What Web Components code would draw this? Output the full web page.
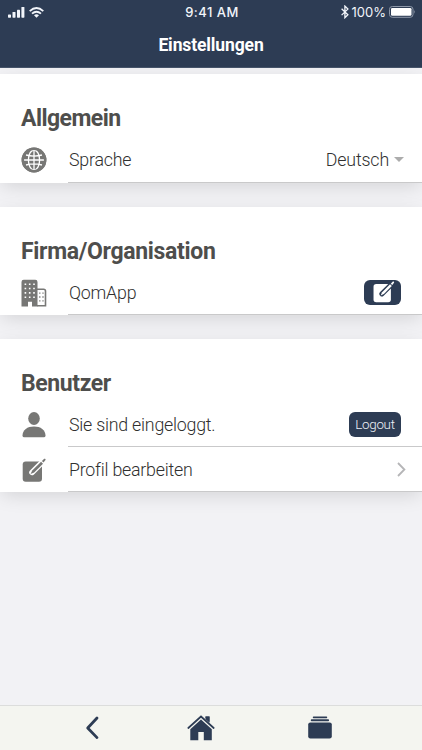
<!DOCTYPE html>
<html lang="de"><head><meta charset="utf-8"><title>Einstellungen</title>
<style>html,body{margin:0;height:100%}body{font-family:Roboto,"Liberation Sans",sans-serif;background:#f2f2f5;overflow:hidden}</style></head>
<body><settings-app></settings-app>
<script>
const define=(name,html)=>{
  const t=document.createElement('template');t.innerHTML=html;
  customElements.define(name,class extends HTMLElement{
    constructor(){super();this.attachShadow({mode:'open'}).append(t.content.cloneNode(true));}
  });
};
const icons={
 globe:`<svg width="26" height="26" viewBox="0 0 26 26"><circle cx="13" cy="13" r="12.4" fill="#777775"/><g fill="none" stroke="#fff" stroke-width="1.3"><path d="M13 3v20M2.5 13h21M5 8q8 2.2 16 0M5 18q8-2.2 16 0"/><ellipse cx="13" cy="13" rx="5.6" ry="10"/></g><circle cx="13" cy="13" r="11.2" fill="none" stroke="#777775" stroke-width="2.4"/></svg>`,
 building:`<svg width="26" height="28" viewBox="0 0 26 28"><path d="M.5 27.5V3Q.5.8 2.7.8h11.6q2.2 0 2.2 2.2v24.5H11v-4.7H7v4.7z" fill="#777775"/><path d="M16 10.2h6.6q1.9 0 1.9 1.9v14.6H16" fill="none" stroke="#777775" stroke-width="1.6"/><path d="M4.4 4.4v16M8.7 4.4v16M13 4.4v16" stroke="#fff" stroke-width="1.6" stroke-dasharray="1.6 2.75"/><path d="M18.8 13.4v10M22 13.4v10" stroke="#777775" stroke-width="1.3" stroke-dasharray="1.4 2.5"/></svg>`,
 user:`<svg width="26" height="28" viewBox="0 0 26 28"><ellipse cx="13" cy="7.5" rx="5.8" ry="6.5" fill="#777775"/><path d="M1.5 24.4C1.7 18.8 6.2 15.4 13 15.4s11.3 3.4 11.5 9q0 1.9-1.8 1.9H3.3q-1.8 0-1.8-1.9z" fill="#777775"/></svg>`,
 edit:`<svg width="26" height="26" viewBox="0 0 26 26"><rect x="1.7" y="4.5" width="19.3" height="20.3" rx="3" fill="var(--ink,#777775)"/><path d="M24 2.5 11 15.4" stroke="var(--paper,#fff)" stroke-width="5.6" stroke-linecap="round"/><path d="M9.6 17.1 11.2 13.5 20.1 4.8 22 6.7 13.2 15.6z" fill="var(--ink,#777775)"/><path d="m20.9 4.1 2.3-2.3q1.7-.5 1.3 1.3L22.5 5.6z" fill="var(--ink,#777775)"/></svg>`
};
for(const [name,svg] of Object.entries(icons))define('icon-'+name,`<style>:host,svg{display:block}</style>${svg}`);

define('status-bar',`<style>
:host{display:grid;grid-template-columns:1fr auto 1fr;align-items:center;height:24px;padding:0 6px 0 8px;color:#f2f5fa;font:500 13px Inter,sans-serif}
div{display:flex;align-items:center}.r{justify-content:flex-end}svg{display:block}time{letter-spacing:.48px}.p{font-weight:400;font-size:13px;margin:0 3px;letter-spacing:0}</style>
<div><svg width="36" height="14" viewBox="0 0 36 14" fill="#f2f5fa"><rect y="9.4" width="3" height="3.3" rx=".6"/><rect x="4.5" y="7" width="3" height="5.7" rx=".6"/><rect x="9" y="4.7" width="3" height="8" rx=".6"/><rect x="13.4" y="2" width="3" height="10.7" rx=".6"/><g fill="none" stroke="#f2f5fa" stroke-width="1.8"><path d="M21.7 6.1q6.8-6.3 13.6 0M24 8.7q4.5-4 9 0"/></g><path d="m28.5 12.7-2.5-2.5q2.5-1.9 5 0z"/></svg></div>
<time>9:41 AM</time>
<div class="r"><svg width="8" height="14" viewBox="0 0 8 14" fill="none" stroke="#f2f5fa" stroke-width="1.3"><path d="m.6 3.7 6.3 6-3 3V1.1l3 3-6.3 6"/></svg><span class="p">100%</span><svg width="27" height="12" viewBox="0 0 27 12"><rect x=".5" y=".5" width="23.5" height="10.8" rx="2.8" fill="none" stroke="#8e98a9"/><rect x="2" y="2" width="20.5" height="7.8" rx="1.3" fill="#fff"/><path d="M25.2 4q1.5 1.8 0 3.8z" fill="#8e98a9"/></svg></div>`);

define('app-header',`<style>:host{display:block;height:68px;box-sizing:border-box;background:#2d3c54;border-bottom:1px solid #46546a}
h1{margin:0;height:43px;line-height:43px;text-align:center;color:#fff;font-size:17.5px;letter-spacing:-.12px;font-weight:700}</style><status-bar></status-bar><h1><slot></slot></h1>`);

define('settings-card',`<style>:host{display:block;position:relative;background:#fff;box-shadow:0 5px 18px -2px #00000021}
h2{margin:0;padding:31px 21px 0;height:32.4px;line-height:28px;font-size:23px;letter-spacing:var(--track,-.32px);font-weight:700;color:#4e4e4c}</style><h2><slot name="title"></slot></h2><slot></slot>`);

define('settings-row',`<style>:host{display:flex;height:45px}
.i{width:47px;flex:none;padding-left:21px;display:flex;align-items:center}
.m{flex:1;display:flex;align-items:center;justify-content:space-between;border-bottom:1px solid #c9c9ca;padding-right:var(--end,21px);padding-left:1px;color:#30302f;font-size:17.8px;letter-spacing:-.22px;font-weight:300}</style><div class="i"><slot name="icon"></slot></div><div class="m"><span><slot></slot></span><slot name="end"></slot></div>`);

define('language-select',`<style>:host{display:flex;align-items:center;gap:5px;letter-spacing:-.15px}i{border:5px solid transparent;border-top-color:#acacac;border-bottom:0}</style><slot></slot><i></i>`);
define('action-button',`<style>:host{display:flex;align-items:center;justify-content:center;box-sizing:border-box;width:var(--w,52px);height:25px;border-radius:6px;background:#2d3c54;color:#eef2f8;font-size:13.4px;font-weight:300;letter-spacing:-.3px;--ink:#fff;--paper:#2d3c54}</style><slot></slot>`);
define('row-chevron',`<style>:host,svg{display:block}</style><svg width="9" height="15" viewBox="0 0 9 15" fill="none" stroke="#b5b5b7" stroke-width="1.8"><path d="m1 1 6.4 6.5L1 14"/></svg>`);

define('bottom-nav',`<style>:host{display:grid;grid-template-columns:108px 110px 128px;padding-left:38px;align-items:center;height:45px;box-sizing:border-box;border-top:1px solid #dcdddc;background:#f4f5f0}
span{display:flex;justify-content:center}svg{display:block}span:first-child,span:last-child{padding-bottom:1px}</style>
<span><svg width="14" height="24" viewBox="0 0 14 24" fill="none" stroke="#2d3c54" stroke-width="2.8" stroke-linecap="round" stroke-linejoin="round"><path d="M12 2 2.7 12l9.3 9.6"/></svg></span>
<span><svg width="28" height="26" viewBox="0 0 28 26" fill="#2d3c54"><path d="M18.5 1.4h4v7.7l-4-3.6z"/><path d="M1.5 13 14 1.7 26.5 13" fill="none" stroke="#f4f5f0" stroke-width="4"/><path d="m3.3 14.2 10.7-9.8 10.8 9.8v11.1h-8V17h-5.5v8.3h-8z"/><path d="M18.5 1.4h4v6.4l-4-3.5z"/><path d="M1.3 13 14 1.5 26.7 13" fill="none" stroke="#2d3c54" stroke-width="1.7" stroke-linecap="round"/></svg></span>
<span><svg width="24" height="23" viewBox="0 0 24 23" fill="#2d3c54"><rect x="4.8" y=".5" width="14.4" height="1.7" rx=".7"/><rect x="2.8" y="3.3" width="18.2" height="2" rx=".8"/><rect x=".2" y="6.4" width="23.6" height="16" rx="2.2"/></svg></span>`);

define('settings-app',`<style>:host{display:flex;flex-direction:column;height:750px;width:422px}main{flex:1;min-height:0;overflow:hidden;padding-top:6.3px;display:flex;flex-direction:column;gap:24px}</style>
<app-header>Einstellungen</app-header>
<main>
<settings-card style="--track:-.55px"><span slot="title">Allgemein</span><settings-row style="--end:18px"><icon-globe slot="icon"></icon-globe>Sprache<language-select slot="end">Deutsch</language-select></settings-row></settings-card>
<settings-card><span slot="title">Firma/Organisation</span><settings-row><icon-building slot="icon"></icon-building>QomApp<action-button slot="end" style="--w:37px"><icon-edit style="margin-left:2px;zoom:.9"></icon-edit></action-button></settings-row></settings-card>
<settings-card style="--track:-.4px"><span slot="title">Benutzer</span><settings-row><icon-user slot="icon"></icon-user>Sie sind eingeloggt.<action-button slot="end">Logout</action-button></settings-row><settings-row style="--end:16px"><icon-edit slot="icon"></icon-edit>Profil bearbeiten<row-chevron slot="end"></row-chevron></settings-row></settings-card>
</main><bottom-nav></bottom-nav>`);
</script></body></html>
